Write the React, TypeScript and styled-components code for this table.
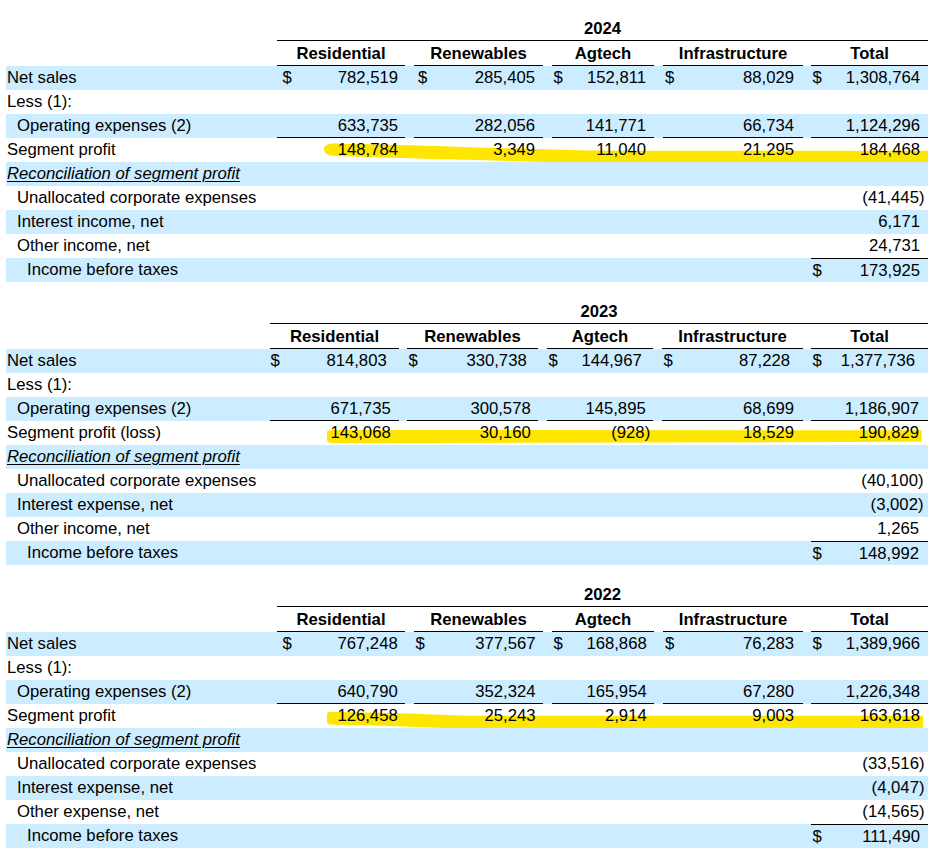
import React from "react";
import styled, { createGlobalStyle } from "styled-components";

const GlobalStyle = createGlobalStyle`
  html, body { margin: 0; padding: 0; background: #ffffff; }
  body {
    font-family: "Liberation Sans", Arial, sans-serif;
    font-size: 16.7px;
    color: #000000;
  }
`;

const BLUE = "#ccecff";
const MARK = "#ffe600";

type Tone = "blue" | "white";

const Page = styled.div`
  width: 922px;
  padding: 17px 4px 0 6px;
  display: flex;
  flex-direction: column;
  gap: 18px;
`;

const Table = styled.section`
  display: flex;
  flex-direction: column;
`;

const Row = styled.div<{ $cols: string; $tone: Tone; $h?: number }>`
  position: relative;
  display: grid;
  grid-template-columns: ${(p) => p.$cols};
  height: ${(p) => p.$h ?? 24}px;
  background: ${(p) => (p.$tone === "blue" ? BLUE : "#ffffff")};
  overflow: hidden;
  line-height: 19px;
`;

const Label = styled.div<{ $indent: number; $italic?: boolean }>`
  position: relative;
  z-index: 1;
  display: flex;
  align-items: center;
  padding-left: ${(p) => p.$indent}px;
  padding-bottom: 1px;
  white-space: nowrap;
  font-style: ${(p) => (p.$italic ? "italic" : "normal")};
  text-decoration: ${(p) => (p.$italic ? "underline" : "none")};
  text-underline-offset: 2px;
  text-decoration-thickness: 1px;
`;

const Amount = styled.div<{ $padL: number; $padR: number; $rule?: "top" | "bottom" }>`
  position: relative;
  z-index: 1;
  box-sizing: border-box;
  display: flex;
  align-items: center;
  justify-content: space-between;
  padding-left: ${(p) => p.$padL}px;
  padding-right: ${(p) => p.$padR}px;
  padding-bottom: ${(p) => (p.$rule === "bottom" ? 0 : 1)}px;
  white-space: nowrap;
  border-top: ${(p) => (p.$rule === "top" ? "1px solid #000" : "0")};
  border-bottom: ${(p) => (p.$rule === "bottom" ? "1px solid #000" : "0")};
`;

const Spacer = styled.div``;

const YearCell = styled.div`
  grid-column: 2 / -1;
  box-sizing: border-box;
  display: flex;
  align-items: center;
  justify-content: center;
  font-weight: bold;
  border-bottom: 1px solid #000;
`;

const HeadCell = styled.div`
  box-sizing: border-box;
  display: flex;
  align-items: center;
  justify-content: center;
  font-weight: bold;
  white-space: nowrap;
  border-bottom: 1px solid #000;
`;

const Paren = styled.span`
  margin-right: -4.5px;
`;

const Marker = styled.svg`
  position: absolute;
  left: 0;
  top: 0;
  width: 922px;
  height: 26px;
  z-index: 0;
  pointer-events: none;
`;

type TableData = {
  year: string;
  cols: number[];
  dollarPad: number[];
  insets: number[];
  netExtra: number;
  segLabel: string;
  net: string[];
  op: string[];
  seg: string[];
  recon: [string, string][];
  income: string;
  mark: string;
};

const SEGMENTS = ["Residential", "Renewables", "Agtech", "Infrastructure", "Total"];

const TABLES: TableData[] = [
  {
    year: "2024",
    cols: [271, 128, 9, 129, 9, 102, 9, 140, 8, 117],
    dollarPad: [5.5, 4, 1.5, 2, 1.5],
    insets: [7, 8, 8, 9, 8],
    netExtra: 0,
    segLabel: "Segment profit",
    net: ["782,519", "285,405", "152,811", "88,029", "1,308,764"],
    op: ["633,735", "282,056", "141,771", "66,734", "1,124,296"],
    seg: ["148,784", "3,349", "11,040", "21,295", "184,468"],
    recon: [
      ["Unallocated corporate expenses", "(41,445)"],
      ["Interest income, net", "6,171"],
      ["Other income, net", "24,731"],
    ],
    income: "173,925",
    mark:
      "M318 11 C318 7 322 5.5 330 5.5 L394 7 C430 8 470 9.5 527 11 C560 12 590 12.7 614 12.7 L922 12.7 L922 26 L614 26 C590 25 560 24 527 23.7 C470 22 430 21 394 20 L330 18 C322 17.8 318 15 318 11 Z",
  },
  {
    year: "2023",
    cols: [264, 129, 8, 131, 9, 106, 9, 141, 8, 117],
    dollarPad: [0.5, 1.5, 1.5, 1.5, 1.5],
    insets: [8.3, 7.3, 7.3, 9, 9],
    netExtra: 4,
    segLabel: "Segment profit (loss)",
    net: ["814,803", "330,738", "144,967", "87,228", "1,377,736"],
    op: ["671,735", "300,578", "145,895", "68,699", "1,186,907"],
    seg: ["143,068", "30,160", "(928)", "18,529", "190,829"],
    recon: [
      ["Unallocated corporate expenses", "(40,100)"],
      ["Interest expense, net", "(3,002)"],
      ["Other income, net", "1,265"],
    ],
    income: "148,992",
    mark:
      "M321 11 C321 9.5 323 9 327 9 L915.7 9.3 L915.7 20.7 L330 22.3 C325 22.4 321 21 321 19 Z",
  },
  {
    year: "2022",
    cols: [271, 128, 9, 129, 9, 102, 9, 140, 8, 117],
    dollarPad: [5.5, 1.5, 1.5, 2, 1.5],
    insets: [7.3, 7.4, 7.3, 9, 8],
    netExtra: 0,
    segLabel: "Segment profit",
    net: ["767,248", "377,567", "168,868", "76,283", "1,389,966"],
    op: ["640,790", "352,324", "165,954", "67,280", "1,226,348"],
    seg: ["126,458", "25,243", "2,914", "9,003", "163,618"],
    recon: [
      ["Unallocated corporate expenses", "(33,516)"],
      ["Interest expense, net", "(4,047)"],
      ["Other expense, net", "(14,565)"],
    ],
    income: "111,490",
    mark:
      "M321 10 C321 8.4 323 8 326 8 C380 8.5 430 10.5 464 11.7 L917 11.7 L917 26 L464 26 C430 23 380 21.5 326 20.7 C323 20.7 321 20 321 18 Z",
  },
];

function Num({ value }: { value: string }) {
  if (value.endsWith(")")) {
    return (
      <span>
        {value.slice(0, -1)}
        <Paren>)</Paren>
      </span>
    );
  }
  return <span>{value}</span>;
}

type CellSpec = { value?: string; dollar?: boolean; rule?: "top" | "bottom" };

function ValueCells({
  t,
  cells,
  extra = 0,
}: {
  t: TableData;
  cells: (CellSpec | null)[];
  extra?: number;
}) {
  const out: React.ReactNode[] = [];
  cells.forEach((c, i) => {
    if (c) {
      out.push(
        <Amount
          key={`a${i}`}
          $padL={t.dollarPad[i]}
          $padR={t.insets[i] + extra}
          $rule={c.rule}
        >
          <span>{c.dollar ? "$" : ""}</span>
          {c.value ? <Num value={c.value} /> : <span />}
        </Amount>
      );
    } else {
      out.push(<Spacer key={`a${i}`} />);
    }
    if (i < cells.length - 1) out.push(<Spacer key={`g${i}`} />);
  });
  return <>{out}</>;
}

function SegmentTable({ t }: { t: TableData }) {
  const cols = t.cols.map((c) => `${c}px`).join(" ");
  const totalOnly = (spec: CellSpec): (CellSpec | null)[] => [null, null, null, null, spec];
  return (
    <Table>
      <Row $cols={cols} $tone="white">
        <Spacer />
        <YearCell>{t.year}</YearCell>
      </Row>
      <Row $cols={cols} $tone="white" $h={25}>
        <Spacer />
        {SEGMENTS.map((s, i) => (
          <React.Fragment key={s}>
            <HeadCell>{s}</HeadCell>
            {i < SEGMENTS.length - 1 && <Spacer />}
          </React.Fragment>
        ))}
      </Row>
      <Row $cols={cols} $tone="blue">
        <Label $indent={1}>Net sales</Label>
        <ValueCells t={t} extra={t.netExtra} cells={t.net.map((v) => ({ value: v, dollar: true }))} />
      </Row>
      <Row $cols={cols} $tone="white">
        <Label $indent={1}>Less (1):</Label>
      </Row>
      <Row $cols={cols} $tone="blue">
        <Label $indent={11}>Operating expenses (2)</Label>
        <ValueCells t={t} cells={t.op.map((v) => ({ value: v, rule: "bottom" as const }))} />
      </Row>
      <Row $cols={cols} $tone="white">
        <Marker viewBox="0 0 922 26" preserveAspectRatio="none" aria-hidden="true">
          <path d={t.mark} fill={MARK} />
        </Marker>
        <Label $indent={1}>{t.segLabel}</Label>
        <ValueCells t={t} cells={t.seg.map((v) => ({ value: v }))} />
      </Row>
      <Row $cols={cols} $tone="blue">
        <Label $indent={1} $italic>
          Reconciliation of segment profit
        </Label>
      </Row>
      {t.recon.map(([label, value], i) => (
        <Row key={label} $cols={cols} $tone={i % 2 === 1 ? "blue" : "white"}>
          <Label $indent={11}>{label}</Label>
          <ValueCells t={t} cells={totalOnly({ value })} />
        </Row>
      ))}
      <Row $cols={cols} $tone="blue">
        <Label $indent={21}>Income before taxes</Label>
        <ValueCells t={t} cells={totalOnly({ value: t.income, dollar: true, rule: "top" })} />
      </Row>
    </Table>
  );
}

export default function App() {
  return (
    <>
      <GlobalStyle />
      <Page>
        {TABLES.map((t) => (
          <SegmentTable key={t.year} t={t} />
        ))}
      </Page>
    </>
  );
}
